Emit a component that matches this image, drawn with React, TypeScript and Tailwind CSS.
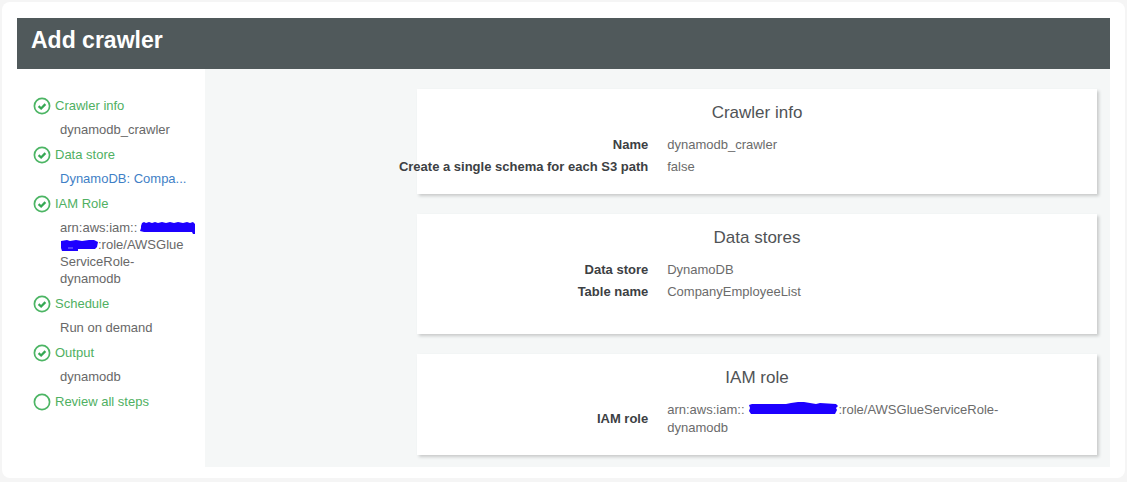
import type { ReactNode } from "react"

function StepIcon({ done }: { done: boolean }) {
  return (
    <svg viewBox="0 0 18 18" className="h-[18px] w-[18px] shrink-0" fill="none" aria-hidden="true">
      <circle cx="9" cy="9" r="7.6" stroke="#4cb564" strokeWidth="1.7" />
      {done && <path d="M5.6 9.2l2.5 2.3 4.3-4.4" stroke="#35a853" strokeWidth="2.3" />}
    </svg>
  )
}

// Marker strokes over the account number
function RedactedStart() {
  return (
    <svg viewBox="-3 -3 59 17" className="inline-block h-[17px] w-[59px] align-top" aria-hidden="true">
      <path
        d="M1 4L2 1 4 0 6 1 9 0 12 1 15 0 18 1 22 0 26 1 30 0 34 1 38 0 43 1 47 0 50 1 53 0 55 2 55 12 53 12 52 10 4 10 0 9 1 6Z"
        fill="#1d00ff"
      />
    </svg>
  )
}

function RedactedEnd() {
  return (
    <svg viewBox="0 -1 38 17" className="inline-block h-[17px] w-[38px] align-top" aria-hidden="true">
      <path d="M1 4L7 3 10 4 16 3 22 4 29 3 34 3 38 5 37 10 35 12 18 12 18 14 2 14 1 11Z" fill="#1d00ff" />
      <path d="M8 11h5" stroke="#8c80ff" />
    </svg>
  )
}

function RedactedLong() {
  return (
    <svg viewBox="-3 0 94 14" className="inline-block h-[14px] w-[94px] align-top" aria-hidden="true">
      <path
        d="M1 4L4 3 38 3 43 2 50 1 56 1 62 2 68 3 72 2 88 3 90 5 88 7 89 9 87 13 3 13 1 10 2 7Z"
        fill="#1d00ff"
      />
    </svg>
  )
}

const steps: { title: string; done: boolean; detail?: ReactNode }[] = [
  { title: "Crawler info", done: true, detail: "dynamodb_crawler" },
  {
    title: "Data store",
    done: true,
    detail: (
      <a href="#data-store" className="whitespace-nowrap text-[#3f7fc6]">
        DynamoDB: Compa...
      </a>
    ),
  },
  {
    title: "IAM Role",
    done: true,
    detail: (
      <>
        <span className="whitespace-nowrap">
          arn:aws:iam::
          <RedactedStart />
        </span>
        <br />
        <RedactedEnd />
        :role/AWSGlue
        <br />
        ServiceRole-
        <br />
        dynamodb
      </>
    ),
  },
  { title: "Schedule", done: true, detail: "Run on demand" },
  { title: "Output", done: true, detail: "dynamodb" },
  { title: "Review all steps", done: false },
]

function Row({ label, children }: { label: string; children: ReactNode }) {
  return (
    <div className="flex items-center py-[2px]">
      <dt className="flex w-[34%] shrink-0 justify-end font-bold whitespace-nowrap text-[#3c4043]">{label}</dt>
      <dd className="mr-16 ml-[19px] flex-1 text-[#6b6b6b]">{children}</dd>
    </div>
  )
}

function Panel({ title, className, children }: { title: string; className?: string; children: ReactNode }) {
  return (
    <section className={`bg-white pt-3 shadow-[2px_2px_3px_#c8caca] ${className ?? "pb-4"}`}>
      <h2 className="mb-[9px] text-center text-[17px] leading-6 text-[#505356]">{title}</h2>
      <dl className="text-[13px] leading-[18px]">{children}</dl>
    </section>
  )
}

export default function App() {
  return (
    <div className="min-h-screen bg-[#f5f5f5] px-[2px] pt-[2px] pb-1 font-['Liberation_Sans',Arial,sans-serif]">
      <div className="rounded-lg bg-white px-[15px] pt-4 pb-[11px]">
        <header className="bg-[#50595b] px-[14px] pt-2 pb-[15px]">
          <h1 className="text-[23px] leading-7 font-bold text-white">Add crawler</h1>
        </header>

        <div className="flex">
          <nav aria-label="Crawler steps" className="w-[188px] shrink-0 pt-7 pr-[14px] pl-4 text-[13px] leading-[17px]">
            <ol className="flex flex-col gap-2">
              {steps.map((step) => (
                <li key={step.title}>
                  <a href="#step" className="flex h-[17px] items-center gap-1 text-[#4fb062]">
                    <StepIcon done={step.done} />
                    {step.title}
                  </a>
                  {step.detail && <div className="mt-[7px] ml-[27px] text-[#686868]">{step.detail}</div>}
                </li>
              ))}
            </ol>
          </nav>

          <main className="flex min-w-0 flex-1 flex-col gap-5 bg-[#f5f7f7] pt-5 pr-[13px] pb-3 pl-[212px]">
            <Panel title="Crawler info">
              <Row label="Name">dynamodb_crawler</Row>
              <Row label="Create a single schema for each S3 path">false</Row>
            </Panel>

            <Panel title="Data stores" className="pb-[31px]">
              <Row label="Data store">DynamoDB</Row>
              <Row label="Table name">CompanyEmployeeList</Row>
            </Panel>

            <Panel title="IAM role">
              <Row label="IAM role">
                arn:aws:iam::
                <RedactedLong />
                :role/AWSGlueServiceRole-
                <wbr />
                dynamodb
              </Row>
            </Panel>
          </main>
        </div>
      </div>
    </div>
  )
}
